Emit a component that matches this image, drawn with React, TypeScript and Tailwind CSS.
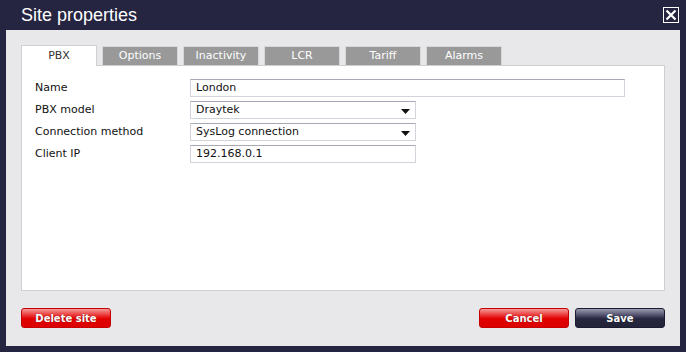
import React from "react";

const tabs = ["PBX", "Options", "Inactivity", "LCR", "Tariff", "Alarms"];

const Arrow = () => (
  <svg width="9" height="5" viewBox="0 0 9 5" className="absolute right-[5px] top-[7px]">
    <path d="M0 0h9L4.5 5z" fill="#111" />
  </svg>
);

const Field = ({ label, value, wide, select }: { label: string; value: string; wide?: boolean; select?: boolean }) => (
  <div className="flex items-center h-[22px]">
    <span className="w-[155px] text-[11px] text-[#111]">{label}</span>
    <div
      className={`relative h-[18px] ${wide ? "w-[435px]" : "w-[226px]"} border border-[#d3d3db] border-t-[#a9a9b6] bg-white pl-[5px] text-[11px] leading-[16px] text-[#111]`}
    >
      {value}
      {select && <Arrow />}
    </div>
  </div>
);

const Button = ({ label, kind }: { label: string; kind: "red" | "navy" }) => (
  <button
    className={`w-[90px] h-[20px] rounded-[3px] text-[10px] font-bold text-white [text-shadow:0_0_1px_rgba(0,0,0,0.6)] border ${
      kind === "red"
        ? "border-[#c40000] bg-[linear-gradient(#f59a9a_0%,#e81818_45%,#e00000_55%,#dc0000_100%)]"
        : "border-[#1a1a30] bg-[linear-gradient(#9a9ab0_0%,#3a3a58_45%,#26263f_55%,#222238_100%)]"
    }`}
  >
    {label}
  </button>
);

export default function App() {
  return (
    <div className="w-[686px] h-[352px] bg-[#252541] flex flex-col font-['DejaVu_Sans',Verdana,sans-serif]">
      <div className="h-[30px] flex items-center justify-between pl-[21px] pr-[7px]">
        <span className="text-[18px] text-white font-['Liberation_Sans',Arial,sans-serif] leading-none">Site properties</span>
        <div className="w-[16px] h-[16px] border border-white flex items-center justify-center">
          <svg width="12" height="12" viewBox="0 0 12 12">
            <path d="M1.5 1.5l9 9M10.5 1.5l-9 9" stroke="white" strokeWidth="2.2" />
          </svg>
        </div>
      </div>
      <div className="flex-1 mx-[6px] mb-[6px] bg-[#e8e8ea] flex flex-col px-[15px] pt-[15px] pb-[18px]">
        <div className="flex gap-[5px] items-end h-[20px] relative z-10">
          {tabs.map((t, i) => (
            <div
              key={t}
              className={`w-[76px] flex items-center justify-center text-[11px] border border-b-0 ${
                i === 0
                  ? "h-[21px] -mb-px bg-white border-[#d0d0d0] text-[#333]"
                  : "h-[19px] bg-[#999999] border-[#d8d8d8] text-white"
              }`}
            >
              {t}
            </div>
          ))}
        </div>
        <div className="h-[226px] bg-white border border-[#cfcfcf] pl-[13px] pt-[11px] flex flex-col">
          <Field label="Name" value="London" wide />
          <Field label="PBX model" value="Draytek" select />
          <Field label="Connection method" value="SysLog connection" select />
          <Field label="Client IP" value="192.168.0.1" />
        </div>
        <div className="mt-auto flex items-center">
          <Button label="Delete site" kind="red" />
          <div className="ml-auto flex gap-[6px]">
            <Button label="Cancel" kind="red" />
            <Button label="Save" kind="navy" />
          </div>
        </div>
      </div>
    </div>
  );
}
